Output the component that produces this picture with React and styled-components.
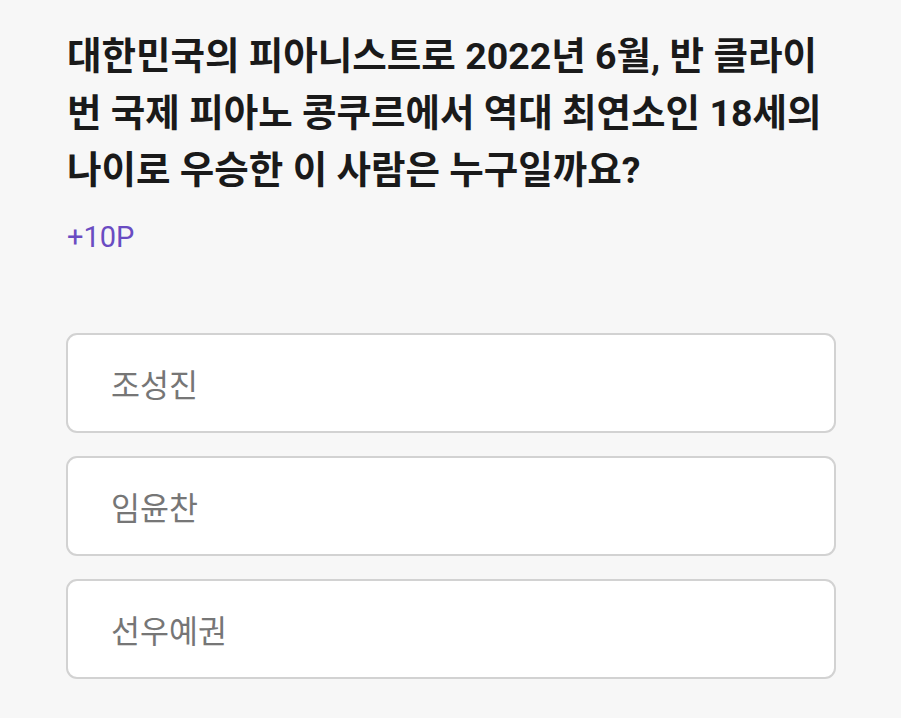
import React from "react";
import styled, { createGlobalStyle } from "styled-components";

const Global = createGlobalStyle`
  html, body { margin: 0; padding: 0; background: #f7f7f7; }
  body { font-family: Roboto, "Noto Sans CJK KR", sans-serif; }
`;

const Page = styled.div`
  width: 901px;
  min-height: 718px;
  box-sizing: border-box;
  padding: 28px 65px 0 66px;
  background: #f7f7f7;
`;

const Question = styled.h1`
  margin: 0;
  font-size: 37.5px;
  font-weight: 700;
  line-height: 57px;
  color: #1a1a1a;
  word-break: break-all;
  padding-left: 1px;
`;

const Points = styled.div`
  margin-top: 18px;
  font-size: 29px;
  line-height: 40px;
  color: #6a4cc2;
  padding-left: 1px;
`;

const Options = styled.div`
  margin-top: 76px;
  display: flex;
  flex-direction: column;
  gap: 23px;
`;

const Option = styled.button`
  height: 100px;
  box-sizing: border-box;
  border: 2px solid #d2d2d2;
  border-radius: 11px;
  background: #ffffff;
  padding: 0 0 0 43px;
  text-align: left;
  font-family: Roboto, "Noto Sans CJK KR", sans-serif;
  font-size: 31.5px;
  color: #767676;
  display: flex;
  align-items: center;
`;

const options = ["조성진", "임윤찬", "선우예권"];

export default function App() {
  return (
    <Page>
      <Global />
      <Question>
        대한민국의 피아니스트로 2022년 6월, 반 클라이번 국제 피아노 콩쿠르에서 역대 최연소인 18세의 나이로 우승한 이 사람은 누구일까요?
      </Question>
      <Points>+10P</Points>
      <Options>
        {options.map((o) => (
          <Option key={o}>{o}</Option>
        ))}
      </Options>
    </Page>
  );
}
